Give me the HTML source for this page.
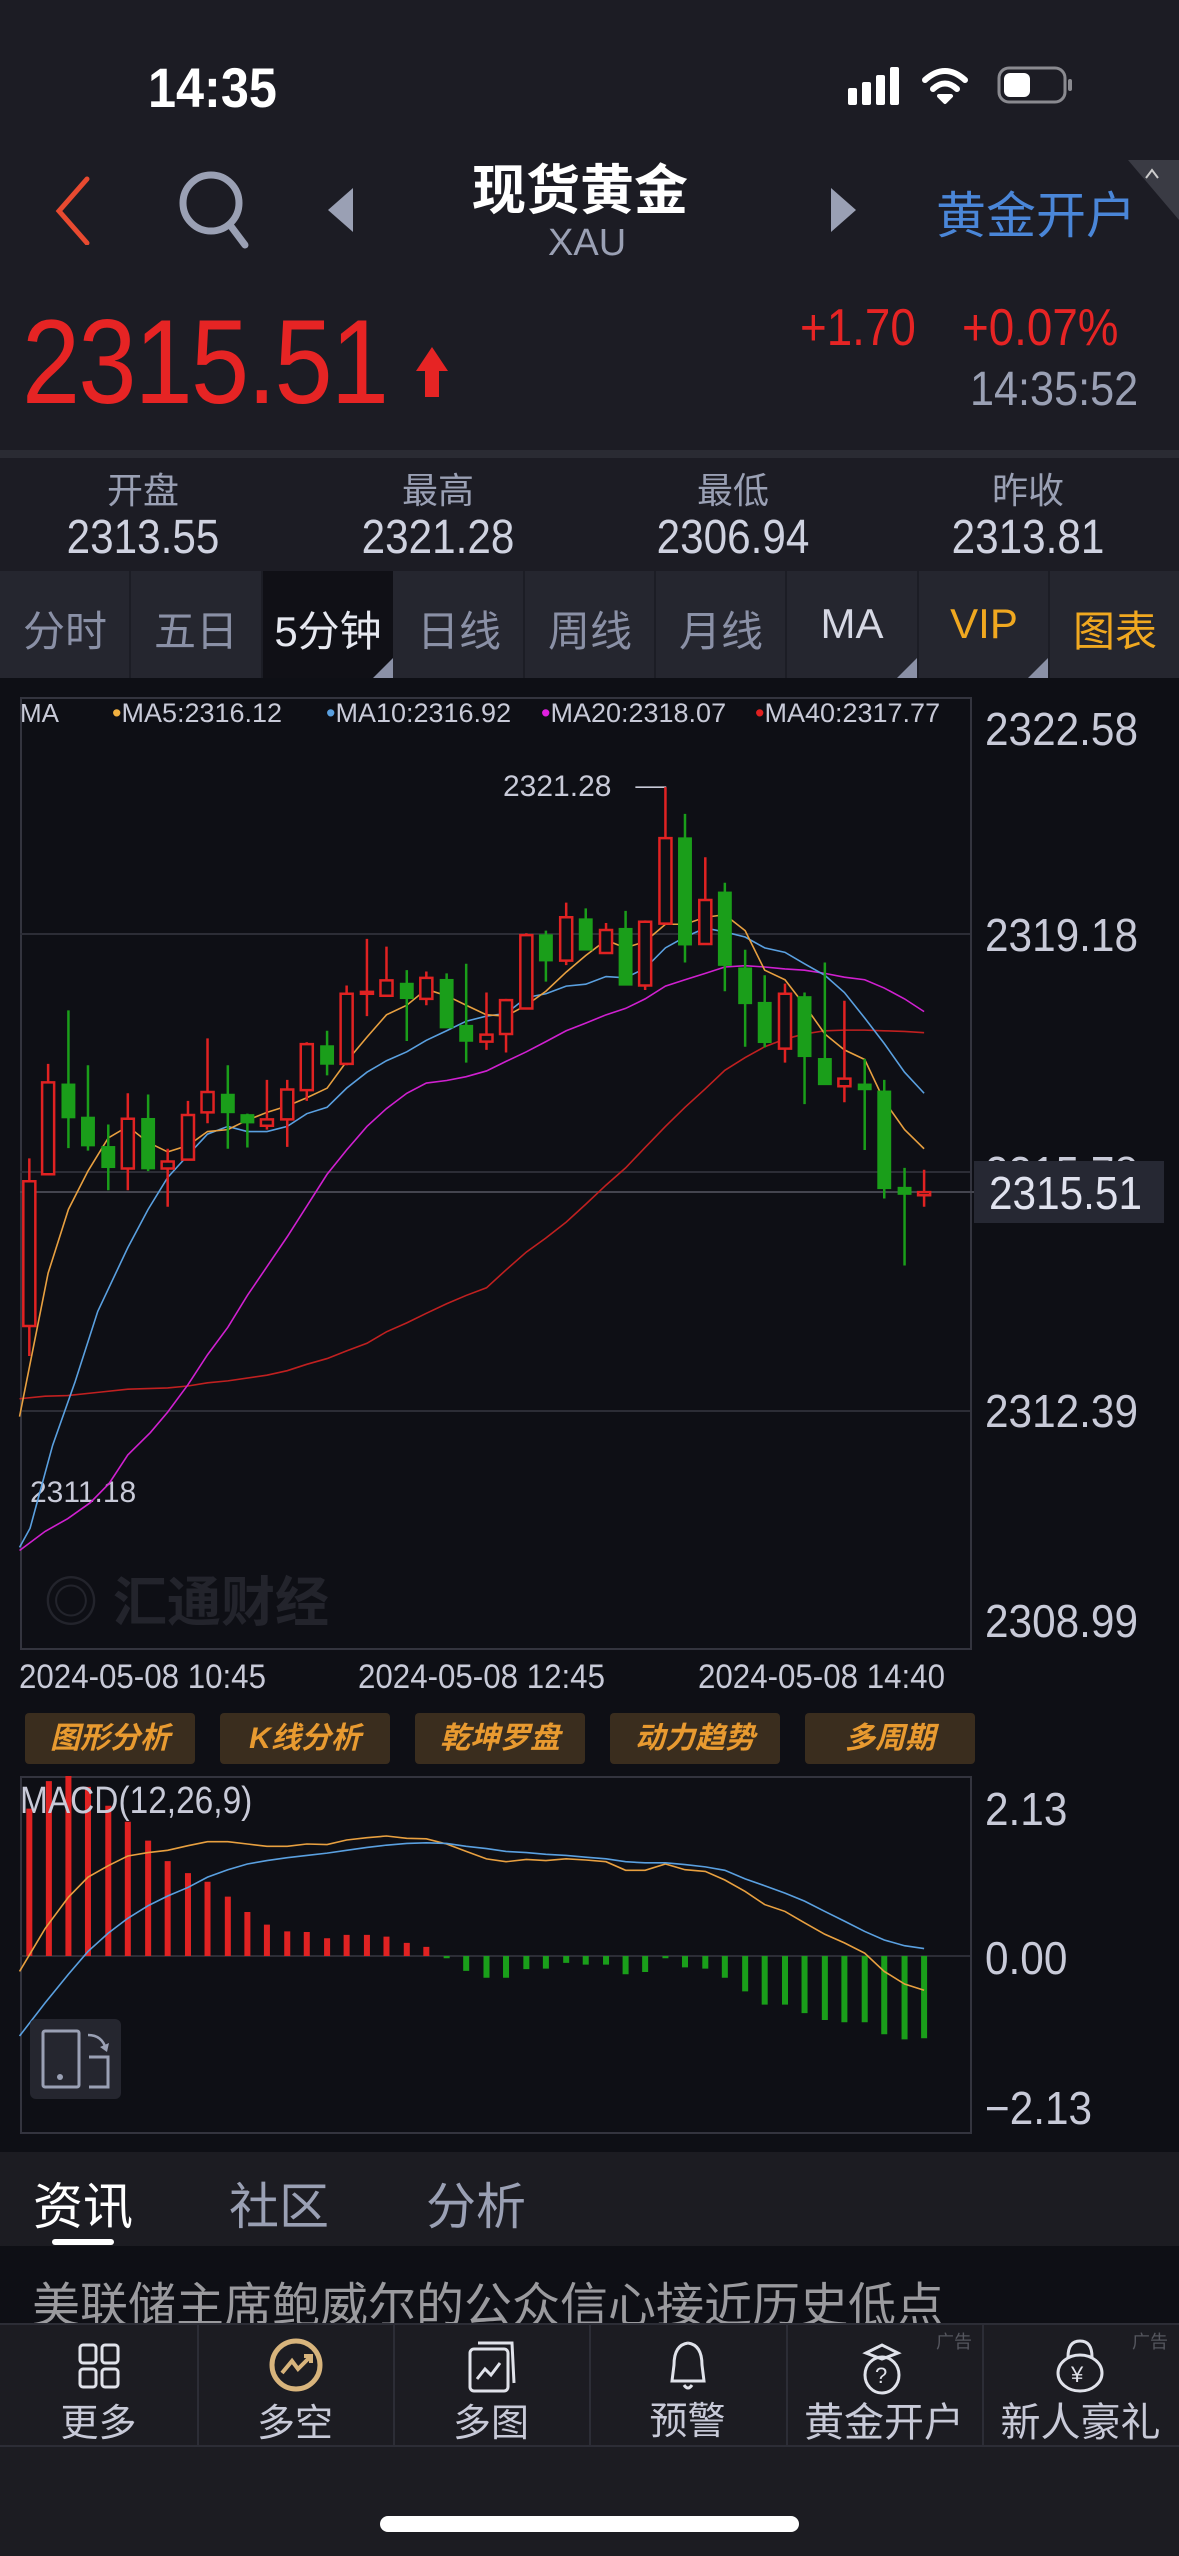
<!DOCTYPE html>
<html><head><meta charset="utf-8">
<style>
*{margin:0;padding:0;box-sizing:border-box}
body{width:1179px;height:2556px;background:#0e0f15;position:relative;overflow:hidden;font-family:"Liberation Sans","Noto Sans CJK SC",sans-serif;color:#c8cad8}
.a{position:absolute;white-space:nowrap}
.ax{font-size:46px;color:#c8cad8;transform:scaleX(.92);transform-origin:left top}
</style></head><body>
<div class="a" style="left:0;top:0;width:1179px;height:450px;background:#1c1c24"></div>
<div class="a" style="left:0;top:450px;width:1179px;height:8px;background:#2a2b33"></div>
<div class="a" style="left:0;top:458px;width:1179px;height:113px;background:#1c1c24"></div>
<div class="a" style="left:148px;top:55px;font-size:56px;font-weight:bold;color:#fff;transform:scaleX(.9);transform-origin:left top">14:35</div>
<svg class="a" style="left:840px;top:62px" width="240" height="50" viewBox="0 0 240 50">
<rect x="8" y="26" width="9" height="17" rx="2" fill="#fff"/><rect x="22" y="20" width="9" height="23" rx="2" fill="#fff"/><rect x="36" y="13" width="9" height="30" rx="2" fill="#fff"/><rect x="50" y="5" width="9" height="38" rx="2" fill="#fff"/>
<path d="M85 18 Q105 0 125 18" stroke="#fff" stroke-width="6" fill="none" stroke-linecap="round"/><path d="M93 27 Q105 16 117 27" stroke="#fff" stroke-width="6" fill="none" stroke-linecap="round"/><path d="M99 34 L105 40 L111 34 Z" fill="#fff" stroke="#fff" stroke-width="4" stroke-linejoin="round"/>
<rect x="159" y="6" width="66" height="34" rx="10" fill="none" stroke="#8a8a90" stroke-width="3"/><rect x="164" y="11" width="26" height="24" rx="6" fill="#fff"/><rect x="228" y="17" width="4" height="12" rx="2" fill="#8a8a90"/>
</svg>
<svg class="a" style="left:50px;top:175px" width="45" height="70"><path d="M37 4 L9 36 L37 68" stroke="#e84a30" stroke-width="5" fill="none" stroke-linecap="round"/></svg>
<svg class="a" style="left:175px;top:170px" width="80" height="80"><circle cx="36" cy="33" r="28" stroke="#9aa0b4" stroke-width="7" fill="none"/><path d="M55 55 L70 75" stroke="#9aa0b4" stroke-width="7" stroke-linecap="round"/></svg>
<svg class="a" style="left:325px;top:185px" width="30" height="50"><path d="M28 3 L3 25 L28 47 Z" fill="#9aa0b4"/></svg>
<svg class="a" style="left:828px;top:185px" width="30" height="50"><path d="M3 3 L28 25 L3 47 Z" fill="#9aa0b4"/></svg>
<div class="a" style="left:472px;top:146px;font-size:54px;font-weight:bold;color:#fff">现货黄金</div>
<div class="a" style="left:548px;top:222px;font-size:38px;color:#9aa0b4">XAU</div>
<div class="a" style="left:936px;top:176px;font-size:50px;color:#4a86d8">黄金开户</div>
<svg class="a" style="left:1128px;top:160px" width="51" height="70"><path d="M0 0 L51 0 L51 60 Z" fill="#3a3b44"/><path d="M18 18 L24 10 L30 18" stroke="#ccc" stroke-width="2" fill="none"/></svg>
<div class="a" style="left:22px;top:293px;font-size:120px;color:#e62424;transform:scaleX(.87);transform-origin:left top;letter-spacing:-2px">2315.51</div>
<svg class="a" style="left:412px;top:345px" width="40" height="55"><path d="M20 2 L36 26 L27 26 L27 52 L13 52 L13 26 L4 26 Z" fill="#e62424"/></svg>
<div class="a" style="left:800px;top:298px;font-size:52px;color:#e62424;transform:scaleX(.88);transform-origin:left top">+1.70</div>
<div class="a" style="left:962px;top:298px;font-size:52px;color:#e62424;transform:scaleX(.88);transform-origin:left top">+0.07%</div>
<div class="a" style="left:970px;top:362px;font-size:48px;color:#9aa0b4;transform:scaleX(.9);transform-origin:left top">14:35:52</div>
<div class="a" style="left:93px;top:462px;width:100px;text-align:center;font-size:36px;color:#9aa0b4">开盘</div>
<div class="a" style="left:388px;top:462px;width:100px;text-align:center;font-size:36px;color:#9aa0b4">最高</div>
<div class="a" style="left:683px;top:462px;width:100px;text-align:center;font-size:36px;color:#9aa0b4">最低</div>
<div class="a" style="left:978px;top:462px;width:100px;text-align:center;font-size:36px;color:#9aa0b4">昨收</div>
<div class="a" style="left:43px;top:510px;width:200px;text-align:center;font-size:48px;color:#cfd2e0;transform:scaleX(.88)">2313.55</div>
<div class="a" style="left:338px;top:510px;width:200px;text-align:center;font-size:48px;color:#cfd2e0;transform:scaleX(.88)">2321.28</div>
<div class="a" style="left:633px;top:510px;width:200px;text-align:center;font-size:48px;color:#cfd2e0;transform:scaleX(.88)">2306.94</div>
<div class="a" style="left:928px;top:510px;width:200px;text-align:center;font-size:48px;color:#cfd2e0;transform:scaleX(.88)">2313.81</div>
<div class="a" style="left:0;top:571px;width:1179px;height:107px;background:#25262f"></div>
<div class="a" style="left:263px;top:571px;width:130px;height:107px;background:#101016"></div>
<div class="a" style="left:129px;top:571px;width:2px;height:107px;background:#1c1d25"></div>
<div class="a" style="left:261px;top:571px;width:2px;height:107px;background:#1c1d25"></div>
<div class="a" style="left:523px;top:571px;width:2px;height:107px;background:#1c1d25"></div>
<div class="a" style="left:654px;top:571px;width:2px;height:107px;background:#1c1d25"></div>
<div class="a" style="left:785px;top:571px;width:2px;height:107px;background:#1c1d25"></div>
<div class="a" style="left:917px;top:571px;width:2px;height:107px;background:#1c1d25"></div>
<div class="a" style="left:1048px;top:571px;width:2px;height:107px;background:#1c1d25"></div>
<div class="a" style="left:0;top:598px;width:130px;text-align:center;font-size:42px;color:#8a90a6">分时</div>
<div class="a" style="left:131px;top:598px;width:130px;text-align:center;font-size:42px;color:#8a90a6">五日</div>
<div class="a" style="left:263px;top:598px;width:130px;text-align:center;font-size:42px;color:#e6e8f0">5分钟</div>
<div class="a" style="left:394px;top:598px;width:130px;text-align:center;font-size:42px;color:#8a90a6">日线</div>
<div class="a" style="left:525px;top:598px;width:130px;text-align:center;font-size:42px;color:#8a90a6">周线</div>
<div class="a" style="left:656px;top:598px;width:130px;text-align:center;font-size:42px;color:#8a90a6">月线</div>
<div class="a" style="left:787px;top:600px;width:130px;text-align:center;font-size:42px;color:#d6d8e4">MA</div>
<div class="a" style="left:919px;top:600px;width:130px;text-align:center;font-size:42px;color:#f0a820">VIP</div>
<div class="a" style="left:1050px;top:598px;width:130px;text-align:center;font-size:42px;color:#f0a820">图表</div>
<svg class="a" style="left:0;top:571px" width="1179" height="107">
<path d="M393 107 L393 87 L373 107Z" fill="#8a90a6"/><path d="M917 107 L917 87 L897 107Z" fill="#8a90a6"/><path d="M1048 107 L1048 87 L1028 107Z" fill="#8a90a6"/>
</svg>
<div class="a" style="left:20px;top:697px;width:952px;height:953px;border:2px solid #33343e"></div>
<div class="a" style="left:20px;top:933px;width:950px;height:2px;background:#2c2d36"></div>
<div class="a" style="left:20px;top:1171px;width:950px;height:2px;background:#2c2d36"></div>
<div class="a" style="left:20px;top:1410px;width:950px;height:2px;background:#2c2d36"></div>
<div class="a" style="left:20px;top:1191px;width:955px;height:2px;background:#44454f"></div>
<div class="a" style="left:44px;top:1558px;font-size:54px;color:#23242c;font-weight:bold">◎ 汇通财经</div>
<div class="a" style="left:20px;top:698px;font-size:26px;color:#c8cad8">MA</div>
<div class="a" style="left:112px;top:698px;font-size:27px;color:#c8cad8"><span style="color:#f0b040">•</span>MA5:2316.12</div>
<div class="a" style="left:326px;top:698px;font-size:27px;color:#c8cad8"><span style="color:#5aa0e0">•</span>MA10:2316.92</div>
<div class="a" style="left:541px;top:698px;font-size:27px;color:#c8cad8"><span style="color:#e020e0">•</span>MA20:2318.07</div>
<div class="a" style="left:755px;top:698px;font-size:27px;color:#c8cad8"><span style="color:#e02020">•</span>MA40:2317.77</div>
<div class="a" style="left:503px;top:770px;font-size:30px;color:#c8cad8">2321.28</div>
<div class="a" style="left:30px;top:1476px;font-size:30px;color:#c8cad8">2311.18</div>
<div class="a ax" style="left:985px;top:702px">2322.58</div>
<div class="a ax" style="left:985px;top:908px">2319.18</div>
<div class="a ax" style="left:985px;top:1146px">2315.78</div>
<div class="a ax" style="left:985px;top:1384px">2312.39</div>
<div class="a ax" style="left:985px;top:1594px">2308.99</div>
<div class="a" style="left:974px;top:1161px;width:190px;height:62px;background:#262833"></div>
<div class="a ax" style="left:989px;top:1166px;color:#e0e2ee">2315.51</div>
<svg class="a" style="left:0;top:680px" width="1179" height="1000" viewBox="0 0 1568 1568" preserveAspectRatio="none">
<g fill="none" stroke-width="1.6">
<path vector-effect="non-scaling-stroke" d="M845 168 L885 168 L885 248" stroke="#c8cad8" stroke-width="1.6"/>
<polyline vector-effect="non-scaling-stroke" stroke="#c02020" points="26,1127 60,1123 90,1122 130,1117 170,1112 223,1110 250,1107 276,1102 303,1099 355,1090 382,1083 408,1073 435,1064 461,1052 488,1040 514,1022 541,1008 567,993 594,978 620,965 647,953 673,925 700,897 726,875 753,850 779,822 806,792 832,765 858,733 885,700 911,670 938,641 964,612 991,592 1017,575 1044,563 1070,555 1097,550 1123,549 1150,549 1176,550 1203,551 1229,553"/>
<polyline vector-effect="non-scaling-stroke" stroke="#d020d0" points="26,1365 60,1335 90,1315 120,1290 145,1260 170,1215 200,1180 223,1148 250,1105 276,1058 303,1015 329,965 355,920 382,873 408,825 435,775 461,737 488,700 514,672 541,648 567,632 594,628 620,622 647,613 673,598 700,583 726,567 753,550 779,538 806,525 832,515 858,500 885,480 911,470 938,460 964,450 991,448 1017,450 1044,453 1070,455 1097,460 1123,466 1150,470 1176,483 1203,500 1229,520"/>
<polyline vector-effect="non-scaling-stroke" stroke="#5aa0e0" points="26,1360 40,1330 70,1200 100,1100 130,990 170,890 197,830 223,780 250,745 276,712 303,700 329,708 355,708 382,700 408,680 435,670 461,640 488,615 514,597 541,583 567,565 594,550 620,535 647,527 673,523 700,498 726,492 753,480 779,477 806,465 832,467 858,452 885,420 911,403 938,389 964,395 991,403 1017,420 1044,427 1070,445 1097,463 1123,490 1150,530 1176,570 1203,615 1229,648"/>
<polyline vector-effect="non-scaling-stroke" stroke="#e8a040" points="26,1155 64,930 91,830 117,770 144,718 170,700 197,725 223,740 250,730 276,708 303,705 329,690 355,678 382,668 408,655 435,640 461,598 488,560 514,525 541,510 567,485 594,495 620,510 647,525 673,527 700,510 726,488 753,458 779,432 806,408 832,420 858,410 885,383 911,383 938,372 964,368 991,393 1017,455 1044,470 1070,510 1097,555 1123,580 1150,595 1176,660 1203,705 1229,735"/>
</g>
<g stroke="#e02222" stroke-width="2.5" fill="none">
<path vector-effect="non-scaling-stroke" d="M39 750V1060M64 602V775M170 648V800M223 735V826M250 660V752M276 562V695M355 627V705M382 627V732M408 568V660M461 479V604M488 406V527M514 418V495M567 457V510M647 490V580M673 500V584M700 397V515M753 349V447M806 381V428M858 377V486M885 168V382M938 278V414M1044 476V600M1123 503V662M1229 768V826"/>
<rect vector-effect="non-scaling-stroke" x="31" y="786" width="16" height="227" fill="#0e0f15"/>
<rect vector-effect="non-scaling-stroke" x="56" y="631" width="16" height="144" fill="#0e0f15"/>
<rect vector-effect="non-scaling-stroke" x="162" y="688" width="16" height="78" fill="#0e0f15"/>
<rect vector-effect="non-scaling-stroke" x="215" y="755" width="16" height="11" fill="#0e0f15"/>
<rect vector-effect="non-scaling-stroke" x="242" y="682" width="16" height="70" fill="#0e0f15"/>
<rect vector-effect="non-scaling-stroke" x="268" y="646" width="16" height="32" fill="#0e0f15"/>
<rect vector-effect="non-scaling-stroke" x="347" y="689" width="16" height="10" fill="#0e0f15"/>
<rect vector-effect="non-scaling-stroke" x="374" y="642" width="16" height="47" fill="#0e0f15"/>
<rect vector-effect="non-scaling-stroke" x="400" y="571" width="16" height="72" fill="#0e0f15"/>
<rect vector-effect="non-scaling-stroke" x="453" y="492" width="16" height="110" fill="#0e0f15"/>
<rect vector-effect="non-scaling-stroke" x="480" y="489" width="16" height="3" fill="#0e0f15"/>
<rect vector-effect="non-scaling-stroke" x="506" y="471" width="16" height="24" fill="#0e0f15"/>
<rect vector-effect="non-scaling-stroke" x="559" y="467" width="16" height="33" fill="#0e0f15"/>
<rect vector-effect="non-scaling-stroke" x="639" y="556" width="16" height="11" fill="#0e0f15"/>
<rect vector-effect="non-scaling-stroke" x="665" y="502" width="16" height="53" fill="#0e0f15"/>
<rect vector-effect="non-scaling-stroke" x="692" y="400" width="16" height="115" fill="#0e0f15"/>
<rect vector-effect="non-scaling-stroke" x="745" y="372" width="16" height="68" fill="#0e0f15"/>
<rect vector-effect="non-scaling-stroke" x="798" y="392" width="16" height="36" fill="#0e0f15"/>
<rect vector-effect="non-scaling-stroke" x="850" y="379" width="16" height="100" fill="#0e0f15"/>
<rect vector-effect="non-scaling-stroke" x="877" y="248" width="16" height="134" fill="#0e0f15"/>
<rect vector-effect="non-scaling-stroke" x="930" y="345" width="16" height="69" fill="#0e0f15"/>
<rect vector-effect="non-scaling-stroke" x="1036" y="492" width="16" height="86" fill="#0e0f15"/>
<rect vector-effect="non-scaling-stroke" x="1115" y="625" width="16" height="12" fill="#0e0f15"/>
<rect vector-effect="non-scaling-stroke" x="1221" y="803" width="16" height="5" fill="#0e0f15"/>
</g>
<g stroke="#1a9e1a" stroke-width="2.5" fill="#1a9e1a">
<path vector-effect="non-scaling-stroke" d="M91 518V734M117 604V738M144 697V800M197 650V770M303 604V735M329 680V733M435 550V620M541 455V566M594 460V545M620 445V600M726 393V473M779 358V423M832 362V478M911 210V443M964 318V488M991 423V575M1017 463V576M1070 490V665M1097 443V634M1150 594V737M1176 627V813M1203 765V918"/>
<rect x="83" y="634" width="16" height="52"/><rect x="109" y="686" width="16" height="44"/><rect x="136" y="732" width="16" height="32"/><rect x="189" y="688" width="16" height="78"/><rect x="295" y="650" width="16" height="28"/><rect x="321" y="682" width="16" height="12"/><rect x="427" y="574" width="16" height="28"/><rect x="533" y="476" width="16" height="23"/><rect x="586" y="470" width="16" height="75"/><rect x="612" y="542" width="16" height="24"/><rect x="718" y="400" width="16" height="40"/><rect x="771" y="375" width="16" height="48"/><rect x="824" y="390" width="16" height="88"/><rect x="903" y="248" width="16" height="167"/><rect x="956" y="333" width="16" height="114"/><rect x="983" y="452" width="16" height="55"/><rect x="1009" y="506" width="16" height="62"/><rect x="1062" y="497" width="16" height="93"/><rect x="1089" y="594" width="16" height="40"/><rect x="1142" y="634" width="16" height="8"/><rect x="1168" y="645" width="16" height="152"/><rect x="1195" y="796" width="16" height="10"/>
</g>
</svg>
<div class="a" style="left:19px;top:1658px;font-size:34px;color:#c8cad8;transform:scaleX(.92);transform-origin:left top">2024-05-08 10:45</div>
<div class="a" style="left:358px;top:1658px;font-size:34px;color:#c8cad8;transform:scaleX(.92);transform-origin:left top">2024-05-08 12:45</div>
<div class="a" style="left:698px;top:1658px;font-size:34px;color:#c8cad8;transform:scaleX(.92);transform-origin:left top">2024-05-08 14:40</div>
<div class="a" style="left:25px;top:1713px;width:170px;height:51px;background:#3a2d1e;border-radius:4px;text-align:center;line-height:51px;font-size:30px;font-weight:bold;font-style:italic;color:#e89a30">图形分析</div>
<div class="a" style="left:220px;top:1713px;width:170px;height:51px;background:#3a2d1e;border-radius:4px;text-align:center;line-height:51px;font-size:30px;font-weight:bold;font-style:italic;color:#e89a30">K线分析</div>
<div class="a" style="left:415px;top:1713px;width:170px;height:51px;background:#3a2d1e;border-radius:4px;text-align:center;line-height:51px;font-size:30px;font-weight:bold;font-style:italic;color:#e89a30">乾坤罗盘</div>
<div class="a" style="left:610px;top:1713px;width:170px;height:51px;background:#3a2d1e;border-radius:4px;text-align:center;line-height:51px;font-size:30px;font-weight:bold;font-style:italic;color:#e89a30">动力趋势</div>
<div class="a" style="left:805px;top:1713px;width:170px;height:51px;background:#3a2d1e;border-radius:4px;text-align:center;line-height:51px;font-size:30px;font-weight:bold;font-style:italic;color:#e89a30">多周期</div>
<div class="a" style="left:20px;top:1776px;width:952px;height:358px;border:2px solid #33343e"></div>
<div class="a" style="left:20px;top:1955px;width:950px;height:2px;background:#2c2d36"></div>
<svg class="a" style="left:0;top:1660px" width="1179" height="896" viewBox="0 0 1568 1568" preserveAspectRatio="none">
<g stroke="#e02222" stroke-width="8">
<path d="M39 518V260M65 518V212M91 518V203M117 518V222M144 518V255M170 518V283M197 518V316M223 518V352M250 518V373M276 518V388M303 518V414M329 518V441M355 518V463M382 518V475M408 518V476M435 518V487M461 518V481M488 518V481M514 518V484M541 518V495M567 518V502"/>
</g>
<g stroke="#1a9e1a" stroke-width="8">
<path d="M594 518V522M620 518V544M647 518V556M673 518V556M700 518V541M726 518V540M753 518V530M779 518V533M806 518V533M832 518V550M858 518V546M885 518V522M911 518V538M938 518V540M964 518V556M991 518V580M1017 518V603M1044 518V603M1070 518V618M1097 518V630M1123 518V634M1150 518V634M1176 518V655M1203 518V664M1229 518V662"/>
</g>
<polyline fill="none" vector-effect="non-scaling-stroke" stroke-width="1.6" stroke="#e8a040" points="26,545 60,470 91,415 117,380 144,360 170,343 197,337 223,333 250,325 276,318 303,318 329,322 355,326 382,326 408,322 435,323 461,315 488,311 514,308 541,312 567,313 594,322 620,335 647,348 673,353 700,349 726,351 753,348 779,350 806,353 832,368 858,368 885,357 911,367 938,370 964,385 991,405 1017,428 1044,440 1070,460 1097,480 1123,495 1150,513 1176,545 1203,567 1229,578"/>
<polyline fill="none" vector-effect="non-scaling-stroke" stroke-width="1.6" stroke="#5aa0e0" points="26,658 60,600 91,550 117,510 144,478 170,452 197,430 223,413 250,398 276,380 303,367 329,357 355,351 382,346 408,342 435,338 461,333 488,328 514,324 541,321 567,320 594,321 620,326 647,330 673,335 700,337 726,340 753,342 779,345 806,348 832,353 858,355 885,355 911,358 938,362 964,368 991,383 1017,395 1044,408 1070,422 1097,440 1123,457 1150,475 1176,490 1203,500 1229,505"/>
</svg>
<div class="a" style="left:20px;top:1780px;font-size:38px;color:#c8cad8;transform:scaleX(.88);transform-origin:left top">MACD(12,26,9)</div>
<div class="a ax" style="left:985px;top:1782px">2.13</div>
<div class="a ax" style="left:985px;top:1931px">0.00</div>
<div class="a ax" style="left:985px;top:2081px">−2.13</div>
<div class="a" style="left:30px;top:2019px;width:91px;height:80px;background:#25262f;border-radius:6px"></div>
<svg class="a" style="left:30px;top:2019px" width="91" height="80"><rect x="13" y="12" width="36" height="56" rx="2" stroke="#9aa0b4" stroke-width="3" fill="none"/><circle cx="30" cy="58" r="3" fill="#9aa0b4"/><path d="M59 38 L78 38 L78 68 L59 68" stroke="#9aa0b4" stroke-width="3" fill="none"/><path d="M58 16 Q72 16 76 30" stroke="#9aa0b4" stroke-width="2.5" fill="none"/><path d="M70 28 L77 33 L79 24Z" fill="#9aa0b4"/></svg>
<div class="a" style="left:0;top:2152px;width:1179px;height:94px;background:#1c1c22"></div>
<div class="a" style="left:33px;top:2167px;font-size:50px;color:#fff">资讯</div>
<div class="a" style="left:229px;top:2167px;font-size:50px;color:#9aa0b4">社区</div>
<div class="a" style="left:426px;top:2167px;font-size:50px;color:#9aa0b4">分析</div>
<div class="a" style="left:52px;top:2239px;width:62px;height:6px;border-radius:3px;background:#fff"></div>
<div class="a" style="left:32px;top:2266px;font-size:48px;color:#9a9a9e">美联储主席鲍威尔的公众信心接近历史低点</div>
<div class="a" style="left:0;top:2323px;width:1179px;height:233px;background:#1c1c22"></div>
<div class="a" style="left:0;top:2323px;width:1179px;height:2px;background:#2c2d36"></div>
<div class="a" style="left:0;top:2445px;width:1179px;height:2px;background:#2c2d36"></div>
<div class="a" style="left:197px;top:2323px;width:2px;height:124px;background:#2c2d36"></div>
<div class="a" style="left:393px;top:2323px;width:2px;height:124px;background:#2c2d36"></div>
<div class="a" style="left:589px;top:2323px;width:2px;height:124px;background:#2c2d36"></div>
<div class="a" style="left:786px;top:2323px;width:2px;height:124px;background:#2c2d36"></div>
<div class="a" style="left:982px;top:2323px;width:2px;height:124px;background:#2c2d36"></div>
<svg class="a" style="left:0;top:2335px" width="1179" height="60" stroke-width="3" fill="none">
<g stroke="#e0e2ea"><rect x="80" y="10" width="16" height="18" rx="3"/><rect x="102" y="10" width="16" height="18" rx="3"/><rect x="80" y="34" width="16" height="18" rx="3"/><rect x="102" y="34" width="16" height="18" rx="3"/></g>
<circle cx="296" cy="30" r="24" stroke="#d8b47c" stroke-width="5"/><path d="M282 38 L292 26 L298 34 L310 22 M304 21 L311 21 L311 28" stroke="#d8b47c" stroke-width="4"/>
<g stroke="#e0e2ea"><rect x="470" y="14" width="38" height="42" rx="4"/><path d="M478 8 L512 8 L514 48"/><path d="M477 44 L485 34 L491 40 L500 28"/></g>
<g stroke="#e0e2ea"><path d="M688 8 Q674 10 674 30 L672 46 L704 46 L702 30 Q702 10 688 8 M684 50 Q688 56 692 50"/></g>
<g stroke="#e0e2ea"><path d="M866 18 L882 10 L898 18 L882 24Z"/><ellipse cx="882" cy="40" rx="17" ry="18"/><text x="875" y="48" font-size="22" fill="#e0e2ea" stroke="none" font-family="Liberation Sans">?</text></g>
<g stroke="#e0e2ea"><path d="M1068 22 Q1068 6 1080 6 Q1092 6 1092 22"/><ellipse cx="1080" cy="38" rx="22" ry="18"/><text x="1071" y="47" font-size="22" fill="#e0e2ea" stroke="none" font-family="Liberation Sans">¥</text></g>
</svg>
<div class="a" style="left:936px;top:2328px;font-size:18px;color:#55565e">广告</div>
<div class="a" style="left:1132px;top:2328px;font-size:18px;color:#55565e">广告</div>
<div class="a" style="left:0;top:2392px;width:197px;text-align:center;font-size:38px;color:#c8cad8">更多</div>
<div class="a" style="left:197px;top:2392px;width:196px;text-align:center;font-size:38px;color:#c8cad8">多空</div>
<div class="a" style="left:393px;top:2392px;width:196px;text-align:center;font-size:38px;color:#c8cad8">多图</div>
<div class="a" style="left:589px;top:2390px;width:197px;text-align:center;font-size:38px;color:#c8cad8">预警</div>
<div class="a" style="left:786px;top:2390px;width:196px;text-align:center;font-size:40px;color:#c8cad8">黄金开户</div>
<div class="a" style="left:982px;top:2390px;width:197px;text-align:center;font-size:40px;color:#c8cad8">新人豪礼</div>
<div class="a" style="left:380px;top:2516px;width:419px;height:16px;border-radius:8px;background:#fff"></div>
</body></html>
